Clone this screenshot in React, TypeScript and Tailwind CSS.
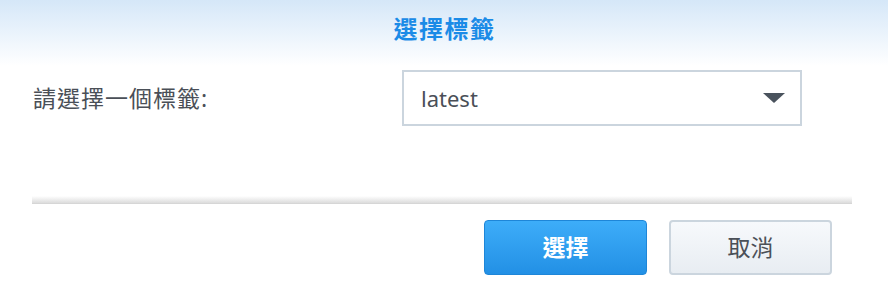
import React from "react";

export default function App() {
  const font = { fontFamily: '"Noto Sans", "Noto Sans CJK TC", sans-serif' };
  return (
    <div className="w-[888px] h-[284px] bg-white flex flex-col overflow-hidden" style={font}>
      <div className="h-[66px] shrink-0 bg-gradient-to-b from-[#d5e7f8] to-white flex items-start justify-center pt-[12px]">
        <span className="text-[24px] leading-[34px] font-bold text-[#1b8be7] tracking-[1.5px] pl-[1px]">選擇標籤</span>
      </div>
      <div className="flex items-center pl-[33px] h-[60px] mt-[2px]">
        <div className="w-[369px] text-[23px] text-[#4a4f57] tracking-[1px]">請選擇一個標籤:</div>
        <div className="w-[400px] h-[56px] border-2 border-[#cbd5de] flex items-center justify-between pl-[17px] pr-[15px]">
          <span className="text-[22px] text-[#4a4f57]">latest</span>
          <svg width="22" height="10" viewBox="0 0 22 10">
            <path d="M0 0 H22 L11 10 Z" fill="#4a535d" />
          </svg>
        </div>
      </div>
      <div className="ml-[32px] mr-[36px] mt-[68px] h-[8px] bg-gradient-to-b from-white to-[#dcdcdc] border-b border-[#d6d6d6]" />
      <div className="flex justify-end gap-[22px] pr-[56px] mt-[16px]">
        <button className="w-[163px] h-[55px] rounded-[4px] border border-[#1e86d8] bg-gradient-to-b from-[#3dadf9] to-[#2290e5] text-white text-[23px] font-bold">選擇</button>
        <button className="w-[163px] h-[55px] rounded-[4px] border-2 border-[#cbd5de] bg-gradient-to-b from-[#f7f9fc] to-[#e8edf2] text-[#4b5058] text-[23px]">取消</button>
      </div>
    </div>
  );
}
